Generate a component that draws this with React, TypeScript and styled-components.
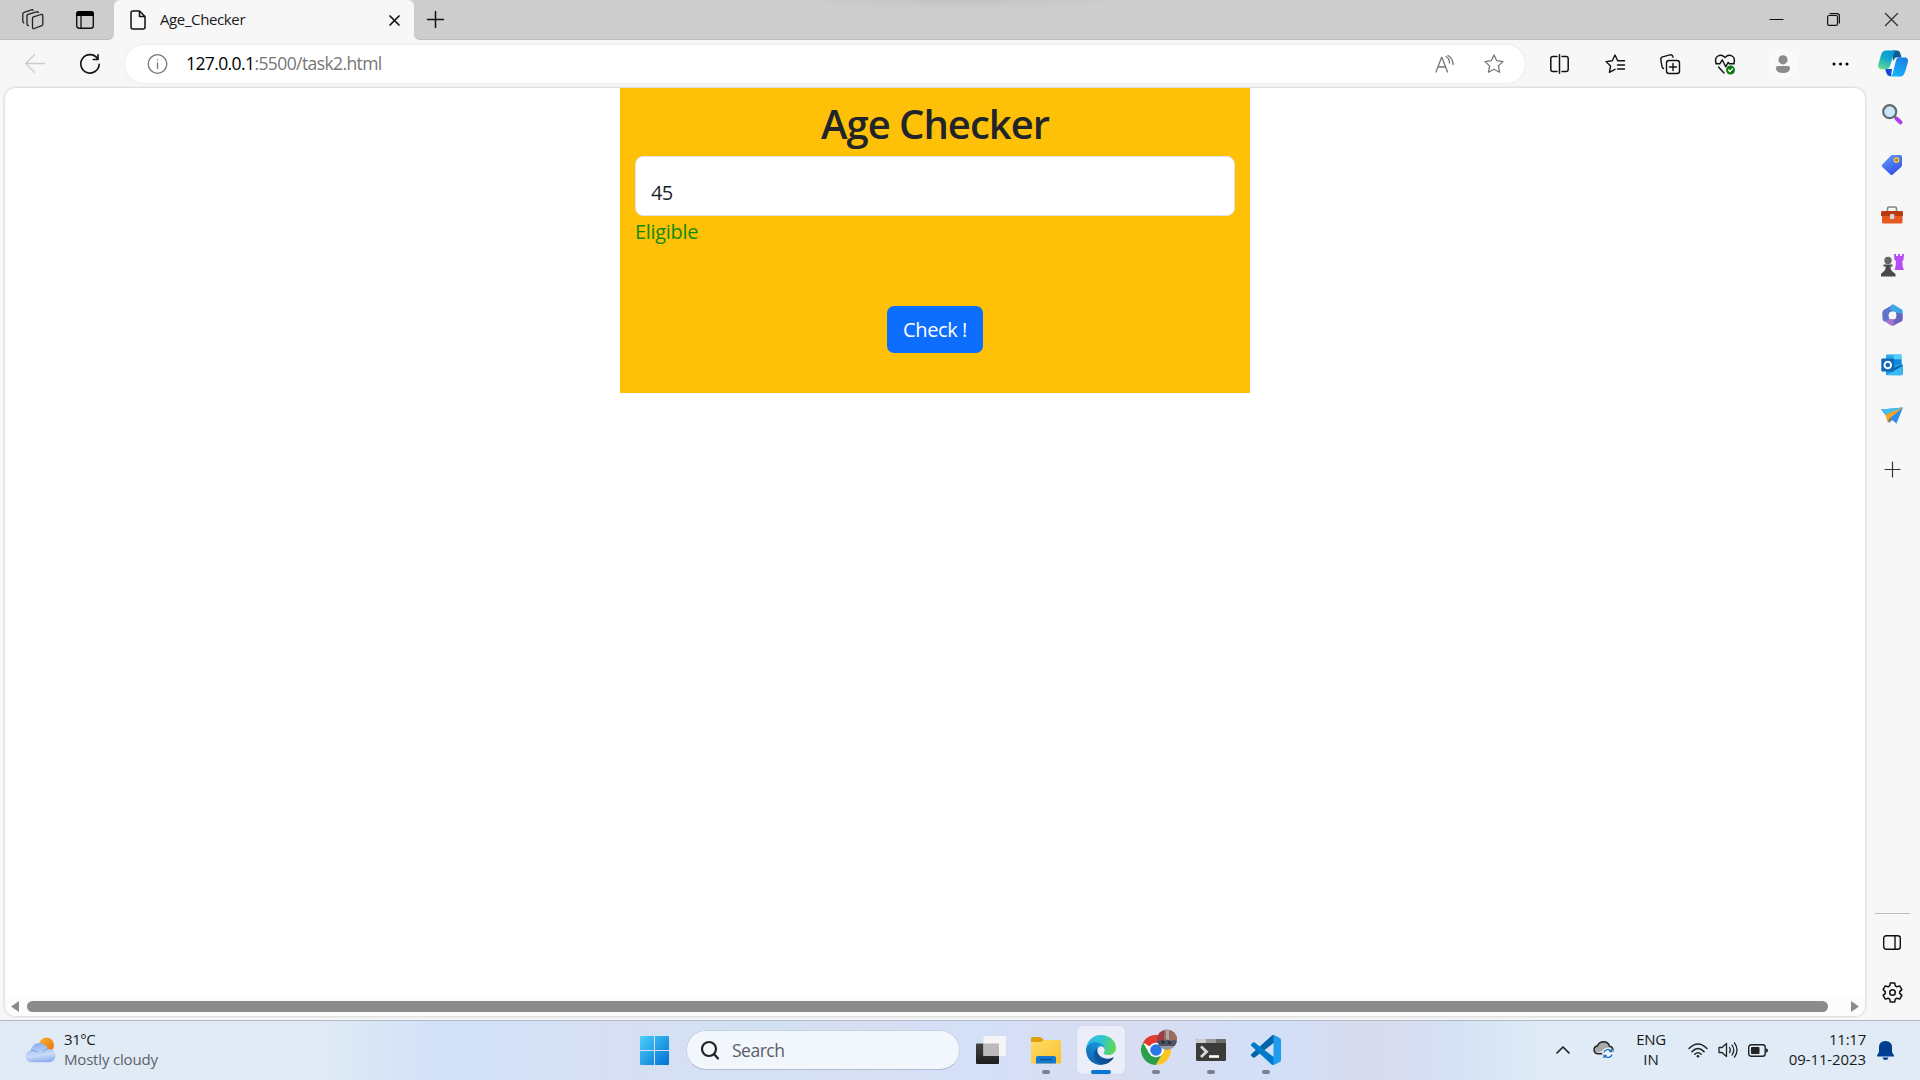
import React from "react";
import styled, { createGlobalStyle } from "styled-components";

const Global = createGlobalStyle`
  html, body { margin: 0; padding: 0; }
  body { width: 1920px; height: 1080px; overflow: hidden; background: #f7f7f7; font-family: "Open Sans", "Noto Sans", sans-serif; }
  *, *::before, *::after { box-sizing: border-box; }
  svg { display: block; flex: none; overflow: visible; }
`;

const Screen = styled.div`
  width: 1920px;
  height: 1080px;
  display: flex;
  flex-direction: column;
  overflow: hidden;
`;

const Label = styled.span<{ $size: number; $track?: number; $color?: string; $lh?: number }>`
  font-size: ${(p) => p.$size}px;
  letter-spacing: ${(p) => p.$track ?? 0}px;
  color: ${(p) => p.$color ?? "#1a1a1a"};
  line-height: ${(p) => p.$lh ?? 20}px;
  white-space: nowrap;
`;

const Cell = styled.div<{ $w: number; $h?: number }>`
  width: ${(p) => p.$w}px;
  height: ${(p) => (p.$h ? `${p.$h}px` : "100%")};
  display: flex;
  flex: none;
  align-items: center;
  justify-content: center;
`;

/* ---------- title bar ---------- */
const TabStrip = styled.header`
  display: flex;
  flex: none;
  height: 40px;
  background: #f7f7f7;
`;

const StripStart = styled.div`
  display: flex;
  width: 114px;
  height: 40px;
  padding: 0 3px 0 6px;
  border-bottom: 1px solid #bdbdbd;
  border-bottom-right-radius: 6px;
  background: #cdcdcd;
`;

const Tab = styled.div`
  display: flex;
  align-items: center;
  width: 300px;
  height: 40px;
  padding: 0 14px 0 16px;
  border-radius: 6px 6px 0 0;
  background: #f7f7f7;
  box-shadow: 0 -6px 0 6px #cdcdcd;
  clip-path: inset(0);
`;

const TabTitle = styled(Label)`
  flex: 1;
  padding: 0 0 2px 14px;
`;

const StripEnd = styled.div`
  display: flex;
  flex: 1;
  align-items: center;
  height: 40px;
  padding-left: 13px;
  border-bottom: 1px solid #bdbdbd;
  border-bottom-left-radius: 6px;
  background: radial-gradient(ellipse 170px 9px at 547px 0, #c3c3c3, #cdcdcd) #cdcdcd;
`;

const WindowControls = styled.div`
  display: flex;
  margin-left: auto;
  height: 39px;
`;

/* ---------- toolbar ---------- */
const Toolbar = styled.nav`
  display: flex;
  flex: none;
  align-items: center;
  height: 47px;
  background: #f7f7f7;
`;

const AddressBar = styled.div`
  display: flex;
  align-items: center;
  width: 1400px;
  height: 38px;
  padding: 0 1px 0 22px;
  border-radius: 19px;
  background: #fff;
  box-shadow: 0 0 3px rgba(0, 0, 0, 0.09);
`;

const Url = styled.div`
  display: flex;
  flex: 1;
  padding: 0 0 2px 19px;
`;

const Avatar = styled.div`
  display: flex;
  align-items: center;
  justify-content: center;
  width: 28px;
  height: 28px;
  border: 1px solid #fff;
  border-radius: 50%;
  background: #f9f9f9;
`;

/* ---------- page ---------- */
const Body = styled.div`
  display: flex;
  flex: 1;
  min-height: 0;
  background: #f7f7f7;
`;

const Viewport = styled.main`
  display: flex;
  flex-direction: column;
  align-items: center;
  width: 1860px;
  height: 928px;
  margin: 1px 0 0 5px;
  border-radius: 10px;
  overflow: hidden;
  background: #fff;
  box-shadow: 0 0 3px rgba(0, 0, 0, 0.25);
`;

const Card = styled.section`
  display: flex;
  flex-direction: column;
  width: 630px;
  height: 305px;
  padding: 10px 15px 0;
  background: #ffc107;
`;

const Heading = styled.h1`
  margin: 0;
  height: 58px;
  font-size: 40px;
  font-weight: 600;
  line-height: 51px;
  letter-spacing: -1px;
  text-align: center;
  color: #212529;
`;

const Field = styled.input`
  width: 600px;
  height: 60px;
  padding: 13px 15px 0;
  border: 1px solid #dee2e6;
  border-radius: 8px;
  outline: 0;
  background: #fff;
  color: #212529;
  font: 20px/30px "Open Sans", sans-serif;
  letter-spacing: -0.7px;
`;

const Result = styled(Label)`
  height: 90px;
  padding-top: 1px;
`;

const CheckButton = styled.button`
  align-self: center;
  width: 96px;
  height: 47px;
  padding: 1px 0 0;
  border: 0;
  border-radius: 7px;
  background: #0d6efd;
  color: #fff;
  font: 20px/30px "Open Sans", sans-serif;
  letter-spacing: -0.4px;
`;

const ScrollBar = styled.div`
  display: flex;
  align-items: center;
  width: 100%;
  height: 19px;
  margin-top: auto;
  padding: 0 6px;
  background: #fcfcfc;
`;

const Thumb = styled.div`
  flex: 1;
  height: 11px;
  margin: 0 23px 0 8px;
  border-radius: 6px;
  background: #8b8b8b;
`;

/* ---------- sidebar ---------- */
const Sidebar = styled.aside`
  display: flex;
  flex-direction: column;
  width: 54px;
  align-items: center;
  padding: 2px 0 3px;
`;

const Divider = styled.div`
  width: 35px;
  height: 1px;
  margin: auto 0 3px;
  background: #bcbcbc;
`;

/* ---------- taskbar ---------- */
const Taskbar = styled.footer`
  display: flex;
  flex: none;
  align-items: center;
  height: 60px;
  padding-bottom: 1px;
  border-top: 1px solid #b3b9c4;
  background: linear-gradient(90deg, #e0ebf6 0, #e0ebf6 320px, #d3e1f8 430px, #d3e1f7 500px, #d7dff2 620px, #d3e1f5 760px, #d7dff3 860px, #d4e0f7 980px, #d8ddf1 1120px, #d1dff7 1280px, #d8dbee 1370px, #d5e2f5 1460px, #dfebf7 1540px, #e0ebf6 1920px);
`;

const Weather = styled.div`
  display: flex;
  width: 627px;
  padding-left: 25px;
  align-items: center;
`;

const Stack = styled.div<{ $align?: string }>`
  display: flex;
  flex-direction: column;
  margin-bottom: 3px;
  align-items: ${(p) => p.$align ?? "flex-start"};
`;

const SearchBox = styled.div`
  display: flex;
  align-items: center;
  width: 274px;
  height: 40px;
  margin: 0 3px 0 4px;
  padding-left: 14px;
  border-radius: 20px;
  border: 1px solid #c9d3e6;
  border-bottom-color: #b3bdd0;
  background: #f2f6fd;
`;

const AppSlot = styled.div<{ $active?: boolean }>`
  position: relative;
  display: flex;
  align-items: center;
  justify-content: center;
  width: 48px;
  height: 48px;
  margin: 0 3.5px;
  border-radius: 5px;
  background: ${(p) => (p.$active ? "#ebeef8" : "transparent")};
  box-shadow: ${(p) => (p.$active ? "0 0 1px #aab3c8" : "none")};
`;

const Indicator = styled.i<{ $active?: boolean }>`
  position: absolute;
  left: 50%;
  bottom: 0;
  width: ${(p) => (p.$active ? 20 : 8)}px;
  height: 4px;
  border-radius: 2px;
  transform: translateX(-50%);
  background: ${(p) => (p.$active ? "#0078d4" : "#7c818e")};
`;

const ChromeBox = styled.div`
  padding: 0 0 6px 6px;
`;

const Tray = styled.div`
  display: flex;
  align-items: center;
  margin-left: auto;
  height: 58px;
`;

const Clock = styled(Stack)`
  width: 89px;
`;

const Line = ({ w = 20, h = 20, sw = 1.4, c = "#111", children }: { w?: number; h?: number; sw?: number; c?: string; children: React.ReactNode }) => (
  <svg width={w} height={h} viewBox={`0 0 ${w} ${h}`} fill="none" stroke={c} strokeWidth={sw} strokeLinecap="round" strokeLinejoin="round">
    {children}
  </svg>
);

const STAR = "M10 1l2.7 5.7 6.3.9-4.6 4.3 1.2 6.4L10 15.3l-5.6 3 1.2-6.4L1 7.600l6.300-.9z";

const Copilot = () => (
  <svg width="30" height="27" viewBox="0 0 30 27">
    <defs>
      <linearGradient id="cpA" x1="0.6" y1="0" x2="0.2" y2="1"><stop offset="0" stopColor="#0c96d8" /><stop offset=".45" stopColor="#14abc8" /><stop offset="1" stopColor="#66dc8c" /></linearGradient>
      <linearGradient id="cpB" x1="0.8" y1="0" x2="0.3" y2="1"><stop offset="0" stopColor="#1f7de6" /><stop offset="1" stopColor="#13b8fb" /></linearGradient>
    </defs>
    <path d="M14 .5h5c2 0 3 1.500 3.500 3.500L23.500 7.500h-6L15 11z" fill="#0b5c95" />
    <path d="M7 19h7l-1 7h-1.500C9 26 8.500 23 7 19z" fill="#1747d8" />
    <path d="M8 .500h11c-2 0-2.700 1.500-3.300 3.500l-3.700 12c-.7 2-1.500 3.200-4 3.200H3.500C.6 19.200-.3 17 .4 14L3 5C4 2 5.400.500 8 .500z" fill="url(#cpA)" />
    <path d="M21.500 7.500h5c3 0 4 2 3.300 5l-2.600 9c-1 3-2.300 5-5 5H11.500c2 0 2.700-1.500 3.300-3.500l3-12c.6-2 1.500-3.500 3.700-3.500z" fill="url(#cpB)" />
  </svg>
);

const SideSearch = () => (
  <svg width="21" height="21" viewBox="0 0 21 21">
    <path d="M14.500 14.500l4 3.800" stroke="#b23cf0" strokeWidth="4" strokeLinecap="round" />
    <path d="M11.500 11.500l2.500 2.500" stroke="#666" strokeWidth="2" />
    <circle cx="7.700" cy="7.700" r="6.500" fill="#c8e7fa" stroke="#666b70" strokeWidth="2.200" />
  </svg>
);

const SideTag = () => (
  <svg width="22" height="22" viewBox="0 0 22 22">
    <defs><linearGradient id="tg" x1="0" y1="0" x2="0.600" y2="1"><stop offset="0" stopColor="#66a2fa" /><stop offset="1" stopColor="#3552e8" /></linearGradient></defs>
    <path d="M11.500 1h7.800q1.700 0 1.700 1.700v8.500q0 1-.8 1.700l-8.400 7.500q-1.300 1-2.400 0L1.100 12.800q-1-1.100 0-2.100l8.700-9q.7-.7 1.700-.7z" fill="url(#tg)" />
    <circle cx="15.500" cy="6" r="2.200" fill="#9c8430" stroke="#ffd43a" strokeWidth="1.300" />
  </svg>
);

const SideTools = () => (
  <svg width="22" height="18" viewBox="0 0 22 18">
    <path d="M6.500 5V2.500Q6.500 1 8 1h6q1.500 0 1.500 1.500V5" fill="none" stroke="#858585" strokeWidth="1.600" />
    <rect x="1" y="7" width="20.500" height="10.500" rx="1.500" fill="#e45a20" />
    <path d="M0 10V6.200Q0 5 1.500 5h19Q22 5 22 6.200V10z" fill="#b93a12" />
    <rect x="9" y="8" width="4.400" height="5" rx="1" fill="#d5d5d5" />
  </svg>
);

const SideChess = () => (
  <svg width="23" height="24" viewBox="0 0 23 24">
    <path d="M13 1h2v2h2V1h2v2h2V1h2l-.5 6-1.200 1 .5 6 1.200 3h-9.500l1-3 .5-6L13.500 7z" fill="#b84cf4" />
    <circle cx="7" cy="7.500" r="3.700" fill="#666" />
    <path d="M2.500 11.500h9v2H9.500q0 4 2.500 5.500l2.500 2v2.500H0V21l2-2q2.700-1.500 2.700-5.500H2.500z" fill="#4a4a4a" />
  </svg>
);

const SideOffice = () => (
  <svg width="21" height="23" viewBox="0 0 21 23">
    <path d="M10.500.5L20.500 6v5L14 8 10.500 6.500z" fill="#45b4ea" />
    <path d="M11.500.5L2.500 5.500Q.5 6.500.5 9v6q0 2 2.500 2.700L7 16V9.500L14.500 6z" fill="#8a6cd4" />
    <path d="M.5 9q.2 9 5 8L7 15V9.500L11 7 9 1.900 2 6Q.5 7 .5 9z" fill="#5b74cc" />
    <path d="M12 .7l6.500 4q2 1.100 2 3.300v7q0 2-1.500 2.800L14 14V8.500L8 5.500 9 .9q1.500-.8 3-.2z" fill="#3da6e4" />
    <path d="M3 17.500l7-4 4.500 1 5-1.500q.5 3.500-1.500 4.500l-6 4q-1.500.9-3 0z" fill="#a873cf" />
    <path d="M14 8.500l6.500 1.500v5q0 2-1.500 2.800L12 21l-.5-4.500 3-2z" fill="#6a62c2" />
    <circle cx="10.500" cy="11.300" r="3.900" fill="#f7f7f7" />
  </svg>
);

const SideOutlook = () => (
  <svg width="22" height="22" viewBox="0 0 22 22">
    <rect x="5" y="0.500" width="15.500" height="12" rx="1" fill="#28a8ea" />
    <rect x="12.500" y=".5" width="8" height="5" fill="#50d0fa" />
    <rect x="12.500" y="5.500" width="8" height="5" fill="#0f8ad8" />
    <path d="M5 10.500h16.500V20q0 1.300-1.200 1.300H6q-1 0-1-1z" fill="#1a9be2" />
    <path d="M21.500 10.500v10L12 14.500z" fill="#0a64ad" /><path d="M5.500 21l16-9v8q0 1.300-1.200 1.300z" fill="#36b8f3" />
    <rect x="0.300" y="4.500" width="13" height="13" rx="1.200" fill="#0f68ba" />
    <circle cx="6.800" cy="11" r="3.300" fill="none" stroke="#fff" strokeWidth="1.900" />
  </svg>
);

const SidePlane = () => (
  <svg width="22" height="17" viewBox="0 0 22 17">
    <path d="M0 2.500L22 .5 15.500 16.500 11 13l-3 3-1-5z" fill="#2f8df0" />
    <path d="M0 2.500L22 .5 5 8z" fill="#45bdf2" />
    <path d="M22 .5L4.500 7.500 6.500 15l2-3.500z" fill="#f5a51c" />
    <path d="M6.500 15.500l2-4L11 13z" fill="#b76c0c" />
  </svg>
);

const WeatherIcon = () => (
  <svg width="31" height="26" viewBox="0 0 31 26">
    <defs>
      <linearGradient id="sun" x1="0" y1="0" x2="1" y2="1"><stop offset="0" stopColor="#f6b72c" /><stop offset="1" stopColor="#ee6a10" /></linearGradient>
      <linearGradient id="cl" x1="0.300" y1="0" x2=".5" y2="1"><stop offset="0" stopColor="#88aef0" /><stop offset=".65" stopColor="#c9dbf7" /><stop offset="1" stopColor="#8caeee" /></linearGradient>
    </defs>
    <circle cx="21.500" cy="8" r="7.500" fill="url(#sun)" />
    <path d="M6 25.300a6 6 0 01-.5-11.900C7 8.500 10.500 6 14.500 6c4 0 7 2.500 8 6 4.500-.8 8 2.500 8 6.500s-3 6.800-6.500 6.800z" fill="url(#cl)" />
    <path d="M5.500 13.400q4-.8 7 2M17.500 15.500q1.500-3.500 5-3.500" stroke="#789de0" strokeWidth="1" fill="none" />
  </svg>
);

const StartIcon = () => (
  <svg width="29" height="29" viewBox="0 0 29 29">
    <defs><linearGradient id="win" gradientUnits="userSpaceOnUse" x1="0" y1="0" x2="29" y2="29"><stop offset="0" stopColor="#4cd0fb" /><stop offset="1" stopColor="#0070d2" /></linearGradient></defs>
    <path d="M1 0h13v14H0V1q0-1 1-1zM15 0h13q1 0 1 1v13H15zM0 15h14v14H1q-1 0-1-1zM15 15h14v13q0 1-1 1H15z" fill="url(#win)" />
  </svg>
);

const TaskView = () => (
  <svg width="30" height="28" viewBox="0 0 30 28">
    <defs><linearGradient id="tv" x1="0" y1="0" x2="0" y2="1"><stop offset="0" stopColor="#444" /><stop offset="1" stopColor="#1c1c1c" /></linearGradient></defs>
    <rect x="0" y="7.500" width="23" height="20.500" rx="1" fill="url(#tv)" />
    <rect x="7.500" y="0" width="22.500" height="20" rx="1" fill="#f5f5f5" />
    <rect x="7.500" y="7.500" width="15.500" height="12.500" fill="#bababa" />
  </svg>
);

const Folder = () => (
  <svg width="30" height="27" viewBox="0 0 30 27">
    <defs><linearGradient id="fd" x1="0" y1="0" x2="1" y2="1"><stop offset="0" stopColor="#ffdc6b" /><stop offset="1" stopColor="#fbc02b" /></linearGradient></defs>
    <path d="M0 1.500Q0 0 1.500 0h8L13 3h15v8H0z" fill="#dfa10b" />
    <path d="M0 5h9.500L13 3h15.500Q30 3 30 4.500V25q0 1.500-1.500 1.500h-27Q0 26.500 0 25z" fill="url(#fd)" />
    <path d="M5 26.500V21q0-2 2-2h16q2 0 2 2v5.500z" fill="#1478cf" /><path d="M9 22.500h12" stroke="#0b4f94" strokeWidth="1.300" />
  </svg>
);

const EdgeIcon = () => (
  <svg width="30" height="30" viewBox="0 0 256 256">
    <defs>
      <linearGradient id="eg1" x1="0" y1="0" x2="1" y2="0"><stop offset="0" stopColor="#0c59a4" /><stop offset="1" stopColor="#114a8b" /></linearGradient>
      <linearGradient id="eg2" x1=".7" y1="0" x2=".3" y2="1"><stop offset="0" stopColor="#1b9de2" /><stop offset="1" stopColor="#0c5fae" /></linearGradient>
      <linearGradient id="eg3" x1="0" y1=".3" x2="1" y2=".5"><stop offset="0" stopColor="#32b7ee" /><stop offset=".5" stopColor="#2fc5cf" /><stop offset="1" stopColor="#63da4f" /></linearGradient>
    </defs>
    <path d="M231 190.500c-3.400 1.800-6.900 3.400-10.500 4.700a101.700 101.700 0 01-35.800 6.400c-47.200 0-88.300-32.400-88.300-74.100 0-11.400 6.300-22.300 16.400-28C70 101.300 59.100 145.800 59.100 171.800c0 73.700 67.800 81.100 82.400 81.100 7.900 0 19.800-2.300 27-4.500l1.300-.5a128 128 0 0066.600-52.900c1.900-3.500-1.700-6.400-5.400-4.500z" fill="url(#eg1)" />
    <path d="M105.700 241.400a79.200 79.200 0 01-22.700-21.300 80.700 80.700 0 0129.500-120c3.100-1.400 8.400-4.100 15.600-4a32.400 32.400 0 0125.600 13 31.900 31.900 0 016.400 18.700c0-.2 24.500-79.600-80-79.600-43.900 0-80 41.600-80 78.200A130.200 130.200 0 0012.100 182.500a128 128 0 00156.300 67 75.500 75.500 0 01-62.800-8z" fill="url(#eg2)" />
    <path d="M152.300 149.200c-.8 1-3.300 2.500-3.300 5.600 0 2.600 1.700 5.100 4.700 7.300 14.500 10 41.700 8.700 41.800 8.700a60 60 0 0030.500-8.400 61.800 61.800 0 0030.400-53.300c.3-22.400-8-37.300-11.300-43.900C224 23.900 177.700 0 127.400 0A128 128 0 000 126.200c.5-36.500 36.800-66 80-66 3.500 0 23.500.3 42 10.100 16.300 8.600 24.900 19 30.800 29.200 6.200 10.600 7.300 24.100 7.300 29.400 0 5.400-2.800 13.400-7.800 20.300z" fill="url(#eg3)" />
  </svg>
);

const ChromeIcon = () => (
  <svg width="36" height="36" viewBox="0 0 36 36">
    <circle cx="15" cy="21" r="15" fill="#fff" />
    <path d="M15 21L2 13.500A15 15 0 0128 13.500z" fill="#e33b2e" />
    <path d="M2 13.500A15 15 0 0015 36l6.500-11.300L15 21 8.500 24.700z" fill="#2a9f4b" />
    <path d="M28 13.500A15 15 0 0115 36l6.500-11.300A7 7 0 0015 13.500z" fill="#fcc620" />
    <path d="M2 13.500h6.500L15 14h13A15 15 0 002 13.500z" fill="#e33b2e" />
    <circle cx="15" cy="21" r="7.300" fill="#fff" /><circle cx="15" cy="21" r="5.800" fill="#2a76e5" />
    <clipPath id="pf"><circle cx="26" cy="10.500" r="10" /></clipPath>
    <g clipPath="url(#pf)">
      <rect x="16" width="20" height="21" fill="#85706c" />
      <rect x="16" y="2" width="7" height="11" fill="#a33a42" />
      <rect x="25" width="3" height="11" fill="#b9a49c" />
      <rect x="30" y="2" width="6" height="9" fill="#a36a5e" />
      <path d="M16 12l4-1 3 1 3-1.500 4 1.500 3-1 3 1v5H16z" fill="#4d5363" />
      <circle cx="22" cy="13" r="1.800" fill="#2c303c" /><circle cx="28.500" cy="13.500" r="1.800" fill="#2f3546" />
      <path d="M18 17h16v4H18z" fill="#9299a6" />
    </g>
  </svg>
);

const TerminalIcon = () => (
  <svg width="30" height="22" viewBox="0 0 30 22">
    <rect width="30" height="22" rx="1.500" fill="#3b3b3b" />
    <path d="M0 4V1.500Q0 0 1.500 0H10v4z" fill="#cfcfcf" /><path d="M10 0h10v4H10z" fill="#9a9a9a" /><path d="M20 0h8.500Q30 0 30 1.500V4H20z" fill="#6d6d6d" />
    <path d="M5 7.500l5.500 5.300L5 18" fill="none" stroke="#d8d8d8" strokeWidth="2.800" /><path d="M13 17.500h10" stroke="#fff" strokeWidth="2.600" />
  </svg>
);

const CodeIcon = () => (
  <svg width="30" height="30" viewBox="0 0 100 100">
    <path d="M96.500 10.800L75.900.9a6.200 6.200 0 00-7.100 1.200L1.300 63.700a4.200 4.200 0 000 6.100l5.500 5a4.200 4.200 0 005.300.3l81.200-61.700c2.700-2 6.700 0 6.700 3.400v-.2c0-2.400-1.400-4.600-3.500-5.800z" fill="#0065a9" />
    <path d="M96.500 89.300l-20.600 9.900a6.200 6.200 0 01-7.100-1.200L1.300 36.500a4.200 4.200 0 010-6.200l5.500-5a4.200 4.200 0 015.300-.2l81.200 61.600c2.700 2.100 6.700.1 6.700-3.300v.2c0 2.400-1.400 4.600-3.500 5.700z" fill="#007acc" />
    <path d="M75.900 99.100a6.200 6.200 0 01-7.200-1.200c2.300 2.300 6.300.7 6.300-2.600V4.700c0-3.300-4-4.900-6.300-2.600A6.200 6.200 0 0175.900.9l20.600 9.900a6.200 6.200 0 013.500 5.700v67.100c0 2.400-1.400 4.600-3.500 5.600z" fill="#1f9cf0" />
  </svg>
);

const OneDrive = () => (
  <svg width="21" height="18" viewBox="0 0 21 18">
    <path d="M4.500 12.800a3.900 3.900 0 01-.3-7.700C5.500 2.300 8 .8 10.500.8c3 0 5.300 1.800 6 4.500 2.200.3 3.400 2 3.400 4 0 2-1.600 3.500-3.500 3.500z" fill="#a9a9a9" stroke="#222" strokeWidth="1.500" />
    <path d="M3 12q5-2 13.500-5.500l2.500 5z" fill="#dedede" />
    <circle cx="15" cy="12.300" r="5.700" fill="#f4f8fd" />
    <path d="M11 11.500a4 4 0 017-1.500m.8-2v2.500h-2.500M19 13.500a4 4 0 01-7 1.500m-.9 2v-2.500h2.500" fill="none" stroke="#1672c9" strokeWidth="1.400" />
  </svg>
);

const App = () => (
  <Screen>
    <Global />
    <TabStrip>
      <StripStart>
        <Cell $w={53}>
          <Line w={22} h={21} c="#222" sw={1.300}>
            <path d="M10.500 9.300q0-1 1-1.400l7.500-2.400q1.800-.4 1.800 1.300v8.500q0 1-1 1.300l-7.500 2.900q-1.800.5-1.800-1.200zM6.500 16.500q-1.500 0-1.500-1.500V6.800q0-1 1-1.500l8.500-2.500q1.500-.3 1.800.9M1.800 14Q.8 13.500.8 12V5q0-1.200 1.200-1.700L9.500.8q1.200-.3 1.700.5" />
          </Line>
        </Cell>
        <Cell $w={52}>
          <svg width="18" height="18" viewBox="0 0 18 18"><rect x=".7" y=".7" width="16.600" height="16.600" rx="2.500" fill="none" stroke="#111" strokeWidth="1.400" /><path d="M0 5V3q0-3 3-3h12q3 0 3 3v2z" fill="#000" /><path d="M5 5v12" stroke="#111" strokeWidth="1.300" /></svg>
        </Cell>
      </StripStart>
      <Tab>
        <Line w={16} h={20} sw={1.500}><path d="M1 3q0-2 2-2h6.500L15 6.500V17q0 2-2 2H3q-2 0-2-2zM9.500 1v5.500H15" /></Line>
        <TabTitle $size={15} $track={-0.38}>Age_Checker</TabTitle>
        <Line w={11} h={11} sw={1.700}><path d="M1 1l9 9M10 1l-9 9" /></Line>
      </Tab>
      <StripEnd>
        <Line w={17} h={17} sw={1.500}><path d="M.5 8.500h16M8.500.5v16" /></Line>
        <WindowControls>
          <Cell $w={57}><Line w={13} h={13} sw={1.200}><path d="M0 6.500h13" /></Line></Cell>
          <Cell $w={57}><Line w={13} h={13} sw={1.200}><rect x=".6" y="2.500" width="9.900" height="9.900" rx="1.500" /><path d="M3 .6h7q2.400 0 2.400 2.400v7" /></Line></Cell>
          <Cell $w={58}><Line w={13} h={13} sw={1.300} c="#333"><path d="M.5.5l12 12M12.500.5l-12 12" /></Line></Cell>
        </WindowControls>
      </StripEnd>
    </TabStrip>

    <Toolbar>
      <Cell $w={70}><Line sw={1.300} c="#ccc"><path d="M19.500 9.500H.5M9.500.8L.5 9.500l9 8.700" /></Line></Cell>
      <Cell $w={40}><Line sw={1.600}><path d="M17.500 4.500a9.200 9.200 0 101.700 5.800M18 .8v4.700h-4.700" /></Line></Cell>
      <Cell $w={15} />
      <AddressBar>
        <Line sw={1.300} c="#767676"><circle cx="10.500" cy="10" r="9.300" /><path d="M10.500 9v5.500M10.500 5.800v.2" /></Line>
        <Url>
          <Label $size={17.5} $track={-0.6} $color="#000" $lh={24}>127.0.0.1</Label>
          <Label $size={17.5} $track={-0.6} $color="#767676" $lh={24}>:5500/task2.html</Label>
        </Url>
        <Cell $w={40}>
          <Line w={19} h={18} sw={1.300} c="#767676"><path d="M1 17L6.500 2.500h.5L12.500 17M3 12h7.500M11 1.500q3.500 2 3.500 6.500M13 .5q5 3 5 9" /></Line>
        </Cell>
        <Cell $w={60}>
          <Line sw={1.300} c="#767676"><path d={STAR} /></Line>
        </Cell>
      </AddressBar>
      <Cell $w={69}><Line w={19} h={20} sw={1.500}><path d="M7 2.500H3q-2.200 0-2.200 2.200v10.500q0 2.300 2.200 2.300h4M12 2.500h4q2.200 0 2.200 2.200v10.500q0 2.300-2.200 2.300h-4M9.500.8v18.500" /></Line></Cell>
      <Cell $w={42}><Line w={20} h={20} sw={1.400}><path d="M12.700 6.700L10 1 7.300 6.700 1 7.600l4.600 4.300-1.200 6.400 5.600-3M12.700 6.700H19.500M12.500 11h7M12.500 15h7" /></Line></Cell>
      <Cell $w={68}><Line w={20} h={20} sw={1.400}><rect x="6.500" y="6.500" width="13" height="13" rx="2.500" /><path d="M13 9.500v7M9.500 13h7M3.500 14.500Q2.300 14 2 12.700L.8 5.500Q.5 3.500 2.500 2.900l7.500-2q2-.4 2.700 1.200l.3 1" /></Line></Cell>
      <Cell $w={42}>
        <Line w={20} h={20} sw={1.400}>
          <path d="M1 9Q-.5 4 3 2t7 1.500Q13.500 0 17 2t2 7M.8 9.800h4l2.400-4 3.500 7 2.500-4.500 1 1.500h5M3.500 13l5.500 6" />
          <circle cx="15.500" cy="16" r="4.500" fill="#107c10" stroke="none" /><path d="M13.500 16l1.500 1.500 2.700-2.800" stroke="#fff" strokeWidth="1.200" />
        </Line>
      </Cell>
      <Cell $w={74}><Avatar><svg width="16" height="18" viewBox="0 0 16 18"><circle cx="8" cy="4.800" r="4.600" fill="#8c8c8c" /><path d="M1 13q0-2 2-2h10q2 0 2 2 0 5-7 5t-7-5z" fill="#8c8c8c" /></svg></Avatar></Cell>
      <Cell $w={40}><svg width="17" height="4" viewBox="0 0 17 4"><circle cx="2" cy="2" r="1.500" /><circle cx="8.500" cy="2" r="1.500" /><circle cx="15" cy="2" r="1.500" /></svg></Cell>
      <Cell $w={6} />
      <Cell $w={54}><Copilot /></Cell>
    </Toolbar>

    <Body>
      <Viewport>
        <Card>
          <Heading>Age Checker</Heading>
          <Field defaultValue="45" aria-label="Age" />
          <Result $size={20} $track={-0.3} $color="#128a0a" $lh={30}>Eligible</Result>
          <CheckButton>Check !</CheckButton>
        </Card>
        <ScrollBar>
          <svg width="8" height="11" viewBox="0 0 8 11"><path d="M0 5.500L8 0v11z" fill="#8b8b8b" /></svg>
          <Thumb />
          <svg width="8" height="11" viewBox="0 0 8 11"><path d="M8 5.500L0 0v11z" fill="#8b8b8b" /></svg>
        </ScrollBar>
      </Viewport>
      <Sidebar>
        <Cell $w={54} $h={51}><SideSearch /></Cell>
        <Cell $w={54} $h={50}><SideTag /></Cell>
        <Cell $w={54} $h={50}><SideTools /></Cell>
        <Cell $w={54} $h={50}><SideChess /></Cell>
        <Cell $w={54} $h={50}><SideOffice /></Cell>
        <Cell $w={54} $h={50}><SideOutlook /></Cell>
        <Cell $w={54} $h={50}><SidePlane /></Cell>
        <Cell $w={54} $h={58}><Line w={15} h={15} sw={1.200} c="#333"><path d="M0 7.500h15M7.500 0v15" /></Line></Cell>
        <Divider />
        <Cell $w={54} $h={50}><Line w={18} h={15} sw={1.400}><rect x=".7" y=".7" width="16.600" height="13.600" rx="2.500" /><path d="M12 .7v13.600" /></Line></Cell>
        <Cell $w={54} $h={50}>
          <Line w={21} h={21} sw={1.500}>
            <path d="M8.300 1h4.400l.6 2.800 1.600 1 2.800-.9 2.200 3.700-2.200 2v1.800l2.200 2-2.200 3.700-2.800-.9-1.600 1-.6 2.800H8.300l-.6-2.800-1.600-1-2.800.9-2.200-3.700 2.200-2V9.600l-2.200-2 2.200-3.700 2.800.9 1.600-1z" /><circle cx="10.500" cy="10.500" r="2.800" />
          </Line>
        </Cell>
      </Sidebar>
    </Body>

    <Taskbar>
      <Weather>
        <WeatherIcon />
        <Cell $w={8} $h={1} />
        <Stack>
          <Label $size={15} $track={-0.45}>31°C</Label>
          <Label $size={15} $track={-0.18} $color="#5b6168">Mostly cloudy</Label>
        </Stack>
      </Weather>
      <Cell $w={55}><StartIcon /></Cell>
      <SearchBox>
        <Line w={18} h={19} sw={2.200} c="#222"><circle cx="8" cy="8" r="7" /><path d="M13 13l4 4.500" /></Line>
        <Cell $w={13} />
        <Label $size={17.5} $track={-0.5} $color="#5a5e66" $lh={24}>Search</Label>
      </SearchBox>
      <AppSlot><TaskView /></AppSlot>
      <AppSlot><Folder /><Indicator /></AppSlot>
      <AppSlot $active><EdgeIcon /><Indicator $active /></AppSlot>
      <AppSlot><ChromeBox><ChromeIcon /></ChromeBox><Indicator /></AppSlot>
      <AppSlot><TerminalIcon /><Indicator /></AppSlot>
      <AppSlot><CodeIcon /><Indicator /></AppSlot>
      <Tray>
        <Cell $w={40}><Line w={14} h={8} sw={1.700} c="#222"><path d="M1 7l6-6 6 6" /></Line></Cell>
        <Cell $w={40}><OneDrive /></Cell>
        <Cell $w={56}><Stack $align="center"><Label $size={15} $track={-0.3}>ENG</Label><Label $size={15}>IN</Label></Stack></Cell>
        <Cell $w={38}>
          <Line w={20} h={15} sw={1.500} c="#222"><path d="M1 5.500q9-9 18 0M4 8.600q6-6 12 0M6.800 11.300q3.200-3 6.400 0" /><circle cx="10" cy="13.300" r="1.300" fill="#222" stroke="none" /></Line>
        </Cell>
        <Cell $w={22}>
          <Line w={20} h={16} sw={1.300} c="#222"><path d="M1 5.500h3L8.500 1.500v13L4 10.500H1zM11.500 5.500q1.700 2.500 0 5M14 3q3.500 5 0 10M16.500.8q5 7.200 0 14.400" /></Line>
        </Cell>
        <Cell $w={38}>
          <svg width="20" height="13" viewBox="0 0 20 13"><rect x=".7" y=".7" width="16.500" height="11.600" rx="2.500" fill="none" stroke="#222" strokeWidth="1.400" /><rect x="3" y="3" width="8.500" height="7" rx="1" fill="#222" /><path d="M18 4.500q2 0 2 2t-2 2z" fill="#222" /></svg>
        </Cell>
        <Clock $align="flex-end"><Label $size={15} $track={-0.25}>11:17</Label><Label $size={15} $track={-0.1}>09-11-2023</Label></Clock>
        <Cell $w={38}>
          <svg width="17" height="19" viewBox="0 0 17 19"><path d="M8.500 0Q15 0 15 6.500V11l2 3.500v1H0v-1L2 11V6.500Q2 0 8.500 0zM5.500 16.500h6q-.5 2.500-3 2.500t-3-2.500z" fill="#003e92" /></svg>
        </Cell>
        <Cell $w={16} />
      </Tray>
    </Taskbar>
  </Screen>
);

export default App;
